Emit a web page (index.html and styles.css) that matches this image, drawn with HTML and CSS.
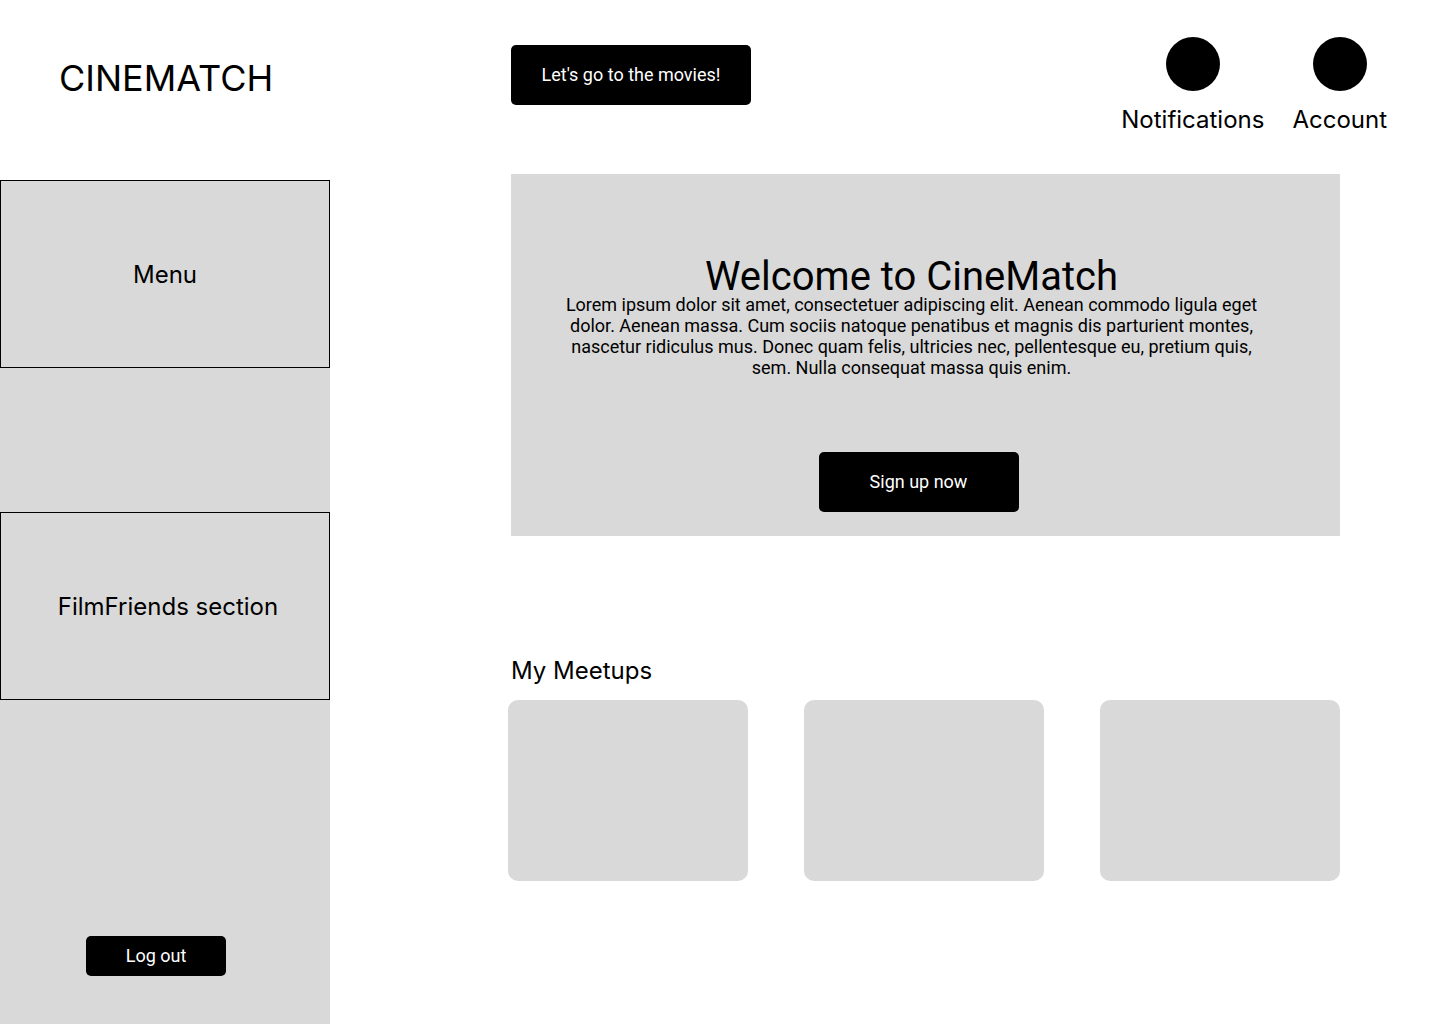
FILE: index.html
```html
<!DOCTYPE html>
<html lang="en">
<head>
<meta charset="utf-8">
<title>CineMatch</title>
<meta name="viewport" content="width=device-width, initial-scale=1">
<link rel="stylesheet" href="styles.css">
</head>
<body>
<div class="page">
  <aside class="side">
    <a class="brand" href="#">CINEMATCH</a>
    <div class="sidebar">
      <nav class="panel">Menu</nav>
      <section class="panel panel-friends">FilmFriends section</section>
      <button class="btn btn-small" type="button">Log out</button>
    </div>
  </aside>
  <div class="content">
    <header class="topbar">
      <button class="btn btn-wide" type="button">Let's go to the movies!</button>
      <nav class="actions">
        <a class="action" href="#"><span class="dot"></span>Notifications</a>
        <a class="action" href="#"><span class="dot"></span>Account</a>
      </nav>
    </header>
    <main class="main">
      <section class="hero">
        <div class="hero-copy">
          <h1 class="hero-title">Welcome to CineMatch</h1>
          <p class="hero-text">Lorem ipsum dolor sit amet, consectetuer adipiscing elit. Aenean commodo ligula eget dolor. Aenean massa. Cum sociis natoque penatibus et magnis dis parturient montes, nascetur ridiculus mus. Donec quam felis, ultricies nec, pellentesque eu, pretium quis, sem. Nulla consequat massa quis enim.</p>
        </div>
        <button class="btn" type="button">Sign up now</button>
      </section>
      <section class="meetups">
        <h2 class="meetups-title">My Meetups</h2>
        <div class="cards">
          <article class="card"></article>
          <article class="card"></article>
          <article class="card"></article>
        </div>
      </section>
    </main>
  </div>
</div>
</body>
</html>
```

FILE: styles.css
```css
* {
  box-sizing: border-box;
}

body {
  margin: 0;
  background: #fff;
  color: #000;
  font-family: Inter, sans-serif;
  font-size: 24px;
  line-height: 29px;
}

a {
  color: inherit;
  text-decoration: none;
}

h1,
h2,
p {
  margin: 0;
  font-weight: 400;
}

.page {
  display: grid;
  grid-template-columns: 330px 1fr;
  min-height: 100vh;
}

.side {
  display: flex;
  flex-direction: column;
}

.brand {
  height: 180px;
  padding: 56px 59px 0;
  font-size: 36px;
  line-height: 44px;
}

.sidebar {
  display: flex;
  flex: 1;
  flex-direction: column;
  gap: 144px;
  padding-bottom: 48px;
  background: #d9d9d9;
}

.panel {
  display: flex;
  align-items: center;
  justify-content: center;
  height: 188px;
  border: 1px solid #000;
}

.panel-friends {
  padding-left: 6px;
}

.btn {
  width: 200px;
  height: 60px;
  padding: 0 0 2px;
  border: 0;
  border-radius: 5px;
  background: #000;
  color: #fff;
  font-family: Roboto, sans-serif;
  font-size: 18px;
  line-height: 21px;
}

.btn-wide {
  width: 240px;
}

.btn-small {
  width: 140px;
  height: 40px;
  margin: auto 0 0 86px;
}

.topbar {
  display: flex;
  align-items: flex-start;
  justify-content: space-between;
  height: 174px;
  padding: 37px 53px 0 181px;
}

.topbar .btn {
  margin-top: 8px;
}

.actions {
  display: flex;
  gap: 28px;
}

.action {
  display: flex;
  flex-direction: column;
  align-items: center;
  gap: 14px;
}

.dot {
  width: 54px;
  height: 54px;
  border-radius: 50%;
  background: #000;
}

.main {
  padding: 0 100px 0 178px;
}

.hero {
  display: flex;
  flex-direction: column;
  align-items: center;
  gap: 74px;
  margin-left: 3px;
  padding: 86px 68px 24px 54px;
  background: #d9d9d9;
  font-family: Roboto, sans-serif;
}

.hero-copy {
  width: 100%;
  max-width: 700px;
  margin-right: 14px;
  text-align: center;
}

.hero-title {
  font-size: 40px;
  line-height: 34px;
}

.hero-text {
  font-size: 18px;
  line-height: 21px;
}

.meetups {
  padding: 120px 0 60px;
}

.meetups-title {
  margin: 0 0 15px 3px;
  font-size: 24px;
}

.cards {
  display: grid;
  grid-template-columns: repeat(3, 1fr);
  gap: 56px;
}

.card {
  height: 181px;
  border-radius: 10px;
  background: #d9d9d9;
}
```
